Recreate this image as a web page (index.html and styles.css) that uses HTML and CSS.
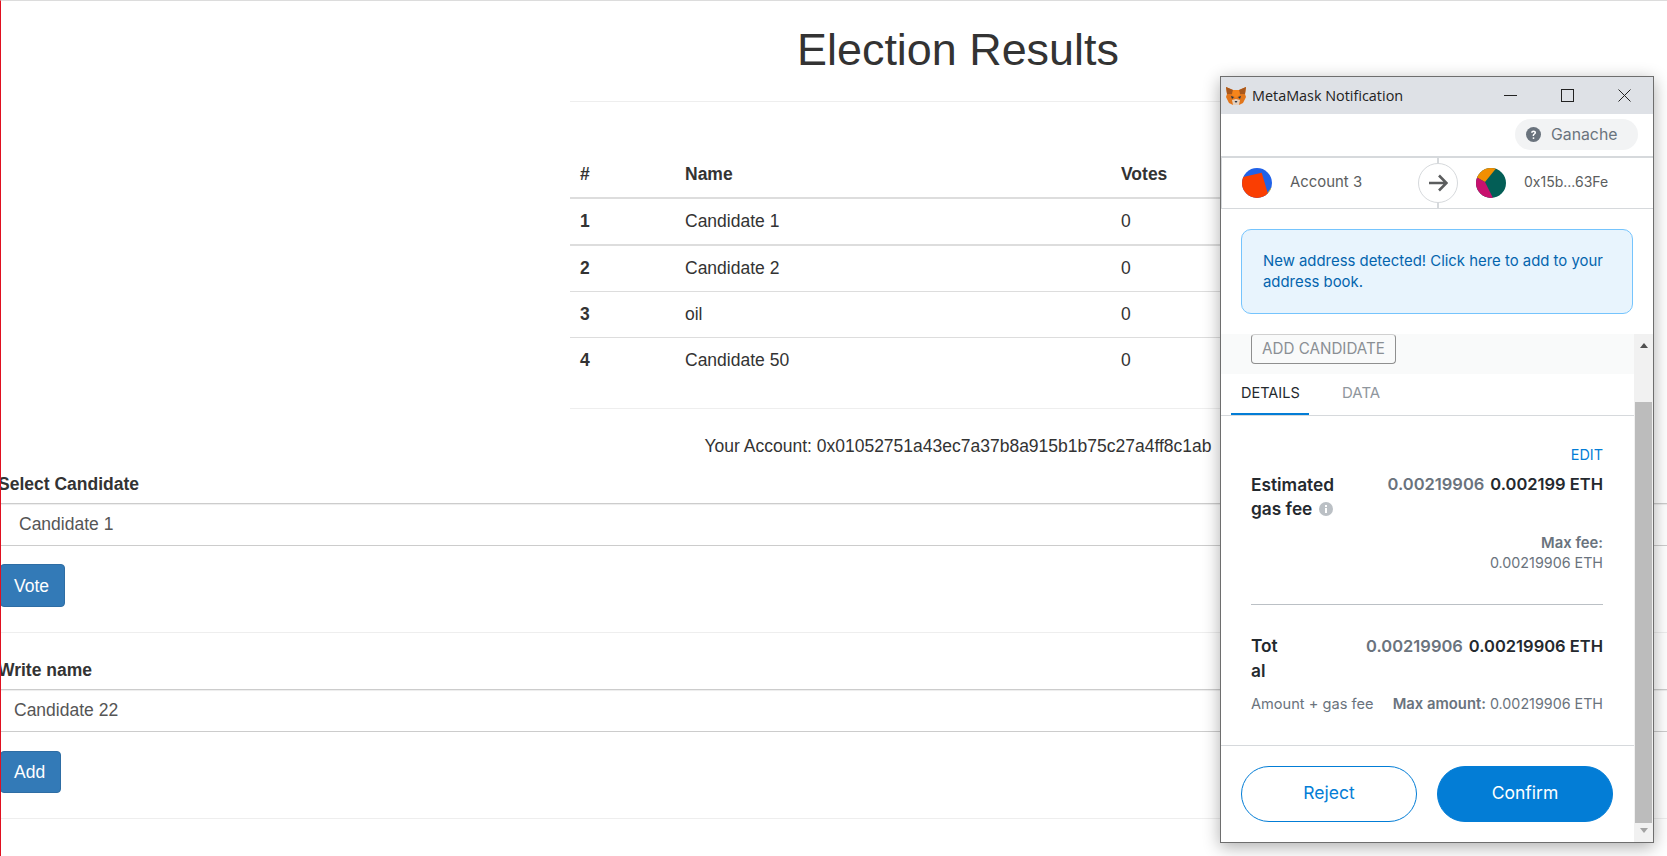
FILE: index.html
```html
<!DOCTYPE html>
<html lang="en">
<head>
<meta charset="utf-8">
<title>Election Results</title>
<link rel="stylesheet" href="styles.css">
</head>
<body>
<div class="page">
  <section class="results">
    <h1 class="title">Election Results</h1>
    <hr class="rule">
    <table class="votes">
      <thead>
        <tr><th class="c-id">#</th><th class="c-name">Name</th><th class="c-votes">Votes</th></tr>
      </thead>
      <tbody>
        <tr class="row-first"><th>1</th><td>Candidate 1</td><td>0</td></tr>
        <tr class="row-second"><th>2</th><td>Candidate 2</td><td>0</td></tr>
        <tr><th>3</th><td>oil</td><td>0</td></tr>
        <tr><th>4</th><td>Candidate 50</td><td>0</td></tr>
      </tbody>
    </table>
    <hr class="rule rule-end">
    <p class="account">Your Account: 0x01052751a43ec7a37b8a915b1b75c27a4ff8c1ab</p>
  </section>

  <form class="vote-form">
    <div class="label">Select Candidate</div>
    <div class="control control-select">Candidate 1</div>
    <div class="btn btn-vote">Vote</div>
    <hr class="rule rule-form">
    <div class="label">Write name</div>
    <div class="control control-input">Candidate 22</div>
    <div class="btn btn-add">Add</div>
    <hr class="rule rule-form">
  </form>

  <div class="popup">
    <header class="titlebar">
      <svg class="fox" viewBox="0 0 20 18" width="20" height="18">
        <polygon points="0,0 7,3 13,3 20,0 19,7 20,10 17,16 13,18 7,18 3,16 0,10 1,7" fill="#e2761b"/>
        <polygon points="0,0 7,3 6,7 1,7" fill="#a9581c"/>
        <polygon points="20,0 13,3 14,7 19,7" fill="#a9581c"/>
        <polygon points="7,3 13,3 14,8 10,11 6,8" fill="#f6851b"/>
        <polygon points="5,9 8,10 6,12" fill="#233447"/>
        <polygon points="15,9 12,10 14,12" fill="#233447"/>
        <polygon points="6,13 10,12 14,13 13,18 7,18" fill="#e4d0bf"/>
        <polygon points="8.5,14 11.5,14 10,16" fill="#233447"/>
      </svg>
      <span class="titlebar-text">MetaMask Notification</span>
      <div class="winctl">
        <span class="winbtn"><svg viewBox="0 0 13 13" width="13" height="13"><path d="M0 6.5H13" stroke="#222" fill="none"/></svg></span>
        <span class="winbtn"><svg viewBox="0 0 13 13" width="13" height="13"><rect x=".5" y=".5" width="12" height="12" stroke="#222" fill="none"/></svg></span>
        <span class="winbtn"><svg viewBox="0 0 13 13" width="13" height="13"><path d="M.5 .5L12.5 12.5M12.5 .5L.5 12.5" stroke="#222" fill="none"/></svg></span>
      </div>
    </header>

    <div class="network-row">
      <div class="network">
        <svg class="network-icon" viewBox="0 0 16 16" width="15" height="15">
          <circle cx="8" cy="8" r="8" fill="#6a737d"/>
          <path d="M5.4 6.2C5.5 4.6 6.6 3.7 8.1 3.7c1.5 0 2.6.9 2.6 2.2 0 1.1-.6 1.6-1.3 2.1-.6.4-.8.7-.8 1.3v.3H7.1v-.5c0-1 .4-1.5 1.1-2 .5-.4.8-.6.8-1.1 0-.5-.4-.8-.9-.8-.6 0-1 .4-1 1Z" fill="#fff"/>
          <circle cx="8" cy="11.8" r="1" fill="#fff"/>
        </svg>
        <span>Ganache</span>
      </div>
    </div>

    <div class="sender-row">
      <div class="party party-from">
        <svg class="identicon" viewBox="0 0 30 30" width="30" height="30">
          <defs><clipPath id="clip-a"><circle cx="15" cy="15" r="15"/></clipPath></defs>
          <g clip-path="url(#clip-a)">
            <rect width="30" height="30" fill="#2162e8"/>
            <polygon points="31,17 31,30 22,30" fill="#f1c40f"/>
            <polygon points="-6,10.5 19.7,4.7 26.3,27 22,34 -4,36" fill="#fa3e02"/>
          </g>
        </svg>
        <span class="party-name party-name-account">Account 3</span>
      </div>
      <div class="arrow-wrap">
        <div class="arrow-circle">
          <svg viewBox="0 0 20 20" width="20" height="20"><path d="M1 10H18M11 2.5L18.5 10L11 17.5" stroke="#5b5d5e" stroke-width="2.6" fill="none"/></svg>
        </div>
      </div>
      <div class="party party-to">
        <svg class="identicon" viewBox="0 0 30 30" width="30" height="30">
          <defs><clipPath id="clip-b"><circle cx="15" cy="15" r="15"/></clipPath></defs>
          <g clip-path="url(#clip-b)">
            <rect width="30" height="30" fill="#035e56"/>
            <polygon points="-2,-2 22,-2 9,14 -2,8" fill="#f18f01"/>
            <polygon points="-2,8 9,14 18,32 -2,32" fill="#c8106e"/>
          </g>
        </svg>
        <span class="party-name">0x15b...63Fe</span>
      </div>
    </div>

    <div class="alert">New address detected! Click here to add to your address book.</div>

    <div class="scroller">
      <div class="scroll-body">
        <div class="method-band"><div class="method-btn">ADD CANDIDATE</div></div>
        <nav class="tabs">
          <span class="tab tab-active">DETAILS</span>
          <span class="tab">DATA</span>
        </nav>
        <div class="details">
          <div class="edit">EDIT</div>
          <div class="fee-row">
            <div class="fee-label fee-label-gas">Estimated gas fee <svg class="info" viewBox="0 0 14 14" width="14" height="14"><circle cx="7" cy="7" r="7" fill="#bbc0c5"/><rect x="6" y="6" width="2" height="5" fill="#fff"/><rect x="6" y="3" width="2" height="2" fill="#fff"/></svg></div>
            <div class="fee-values"><span class="muted-strong">0.00219906</span> <span class="strong">0.002199 ETH</span></div>
          </div>
          <div class="maxfee">
            <div class="maxfee-label">Max fee:</div>
            <div class="maxfee-value">0.00219906 ETH</div>
          </div>
          <hr class="divider">
          <div class="total-row">
            <div class="fee-label fee-label-total">Total</div>
            <div class="fee-values"><span class="muted-strong">0.00219906</span> <span class="strong">0.00219906 ETH</span></div>
          </div>
          <div class="amount-row">
            <span class="amount-text">Amount + gas fee</span>
            <span><b class="maxfee-label">Max amount:</b> 0.00219906 ETH</span>
          </div>
        </div>
        <footer class="actions">
          <div class="action action-reject">Reject</div>
          <div class="action action-confirm">Confirm</div>
        </footer>
      </div>
      <div class="scrollbar">
        <div class="arrow-up"></div>
        <div class="thumb"></div>
        <div class="arrow-down"></div>
      </div>
    </div>
  </div>
</div>
</body>
</html>
```

FILE: styles.css
```css
* { box-sizing: border-box; }
html, body { margin: 0; padding: 0; height: 100%; }
body {
  background: #fff;
  color: #333;
  font-family: "Liberation Sans", Arial, sans-serif;
  font-size: 17.5px;
  overflow: hidden;
}
.page {
  position: relative;
  height: 100%;
  overflow: hidden;
  border-top: 1px solid #dcdcdc;
  border-left: 1px solid #e01020;
}
.rule {
  border: 0;
  border-top: 1px solid #eee;
  margin: 0;
}
.results { width: 776px; margin-left: 569px; }
.title {
  margin: 0;
  height: 100px;
  line-height: 98px;
  font-size: 44.9px;
  font-weight: 400;
  text-align: center;
}
.votes {
  width: 776px;
  margin-top: 50px;
  border-collapse: separate;
  border-spacing: 0;
  table-layout: fixed;
}
.votes th, .votes td {
  padding: 0 10px 2px;
  text-align: left;
  height: 46px;
  line-height: 24px;
}
.votes th { font-weight: 700; }
.votes thead th { height: 47px; border-bottom: 2px solid #ddd; }
.votes tbody tr + tr th, .votes tbody tr + tr td { border-top: 1px solid #ddd; }
.votes .row-first th, .votes .row-first td { height: 45px; }
.votes .row-second th, .votes .row-second td { height: 47px; border-top-width: 2px; }
.c-id { width: 105px; }
.c-name { width: 436px; }
.rule-end { margin-top: 25px; }
.account {
  margin: 25px 0 0;
  line-height: 24px;
  text-align: center;
}
.vote-form { margin: 14px 0 0 -1px; }
.label {
  margin-left: -2px;
  font-weight: 700;
  line-height: 24px;
}
.control {
  margin-top: 7px;
  height: 43px;
  line-height: 41px;
  color: #555;
  border-top: 1px solid #ccc;
  border-bottom: 1px solid #ccc;
  box-shadow: inset 0 1px 1px rgba(0, 0, 0, .075);
}
.control-select { padding-left: 19px; }
.control-input { padding-left: 14px; }
.btn {
  width: max-content;
  color: #fff;
  background: #337ab7;
  border: 1px solid #2e6da4;
  border-radius: 4px;
  line-height: 24px;
}
.btn-vote { margin-top: 18px; padding: 8.5px 15px 8.5px 13px; }
.btn-add { margin-top: 19px; padding: 8px 15px 8px 13px; }
.rule-form { margin-top: 25px; }
.rule-form + .label { margin-top: 25px; }

/* MetaMask window */
.popup {
  position: absolute;
  left: 1219px;
  top: 75px;
  width: 434px;
  height: 767px;
  display: flex;
  flex-direction: column;
  background: #fff;
  border: 1px solid #6e6e6e;
  box-shadow: 0 4px 16px rgba(0, 0, 0, .32);
  font-family: Inter, "Liberation Sans", sans-serif;
  font-size: 14px;
  color: #24292e;
}
.titlebar {
  flex: none;
  height: 37px;
  display: flex;
  align-items: center;
  background: #dee1e6;
  padding-left: 5px;
}
.fox { flex: none; }
.titlebar-text {
  margin-left: 6px;
  font-family: "Open Sans", sans-serif;
  font-size: 14.4px;
  color: #222;
}
.winctl { display: flex; margin-left: auto; }
.winbtn {
  width: 57px;
  height: 37px;
  display: flex;
  align-items: center;
  justify-content: center;
}
.network-row {
  flex: none;
  height: 42px;
  display: flex;
  justify-content: flex-end;
  padding: 5px 15px 0 0;
}
.network {
  width: 123px;
  height: 31px;
  display: flex;
  align-items: center;
  gap: 10px;
  padding-left: 11px;
  border-radius: 16px;
  background: #f2f3f4;
  color: #6a737d;
  font-size: 15.8px;
}
.sender-row {
  flex: none;
  height: 53px;
  display: flex;
  align-items: center;
  border-top: 2px solid #d6d9dc;
  border-bottom: 1px solid #d6d9dc;
  border-left: 1px solid #d6d9dc;
  color: #5b5d5e;
}
.party { display: flex; align-items: center; gap: 18px; padding-bottom: 1px; }
.party-from { width: 196px; padding-left: 20px; }
.party-to { padding-left: 18px; }
.identicon { flex: none; }
.party-name { font-size: 14px; line-height: 18px; padding-bottom: 2px; }
.party-name-account { font-size: 14.9px; }
.arrow-wrap {
  position: relative;
  width: 40px;
  height: 100%;
  display: flex;
  align-items: center;
  justify-content: center;
}
.arrow-wrap::before {
  content: "";
  position: absolute;
  left: 19px;
  top: 0;
  bottom: 0;
  border-left: 2px solid #d6d9dc;
}
.arrow-circle {
  position: relative;
  width: 40px;
  height: 40px;
  margin-bottom: 1px;
  display: flex;
  align-items: center;
  justify-content: center;
  background: #fff;
  border: 1px solid #d6d9dc;
  border-radius: 50%;
}
.alert {
  flex: none;
  height: 85px;
  margin: 20px 20px;
  padding: 21px 21px 0;
  background: #e8f4fd;
  border: 1px solid #75c4fd;
  border-radius: 10px;
  color: #0465ae;
  font-size: 14.9px;
  line-height: 21px;
}
.scroller { flex: 1; min-height: 0; display: flex; }
.scroll-body { flex: 1; min-width: 0; display: flex; flex-direction: column; }
.method-band {
  flex: none;
  height: 40px;
  overflow: hidden;
  padding-left: 30px;
  background: #f9fafa;
}
.method-btn {
  width: 145px;
  height: 30px;
  line-height: 28px;
  text-align: center;
  border: 1px solid #8f8f8f;
  border-top-color: #d0d0d0;
  border-radius: 4px;
  color: #8a8f94;
  font-size: 15.2px;
}
.tabs {
  flex: none;
  height: 42px;
  display: flex;
  padding-left: 10px;
  border-bottom: 1px solid #d6d9dc;
}
.tab {
  padding: 0 10px;
  width: 78px;
  text-align: center;
  height: 41px;
  line-height: 38px;
  color: #9fa6ae;
  font-size: 14.5px;
  white-space: nowrap;
}
.tab + .tab { margin-left: 23px; width: auto; font-size: 15px; color: #8f969d; }
.tab-active { color: #24292e; border-bottom: 2px solid #037dd6; }
.details { flex: 1; padding: 29px 31px 0 30px; }
.edit { text-align: right; color: #037dd6; line-height: 20px; font-size: 14.4px; }
.fee-row, .total-row { display: flex; justify-content: space-between; margin-top: 8px; }
.total-row { margin-top: 29px; line-height: 24.5px; }
.fee-row { line-height: 23.5px; }
.fee-label { font-weight: 600; font-size: 17.3px; color: #24292e; }
.strong { font-weight: 600; font-size: 16.5px; color: #24292e; }
.fee-label-gas { width: 100px; }
.fee-label-total { width: 36px; word-break: break-all; }
.muted-strong { font-weight: 600; font-size: 16.5px; color: #6a737d; margin-right: 2px; }
.fee-values { white-space: nowrap; }
.info { vertical-align: -1px; margin-left: 2px; }
.maxfee { margin-top: 13px; text-align: right; color: #6a737d; line-height: 20px; font-size: 14.3px; }
.maxfee-label { font-weight: 600; color: #6a737d; font-size: 14.8px; }
.divider { margin: 31px 0 0; border: 0; border-top: 1px solid #bbc0c5; }
.amount-row {
  display: flex;
  justify-content: space-between;
  margin-top: 11px;
  color: #6a737d;
  line-height: 20px;
  font-size: 14.3px;
  white-space: nowrap;
}
.amount-text { font-size: 14.6px; }
.actions {
  flex: none;
  display: flex;
  gap: 20px;
  padding: 20px;
  border-top: 1px solid #d6d9dc;
}
.action {
  width: 176px;
  height: 56px;
  line-height: 52px;
  text-align: center;
  border: 1px solid #037dd6;
  border-radius: 28px;
  font-size: 17.5px;
  color: #037dd6;
}
.action-confirm { background: #037dd6; color: #fff; }
.scrollbar {
  flex: none;
  width: 19px;
  display: flex;
  flex-direction: column;
  align-items: center;
  background: #f1f1f1;
  padding: 9px 1px;
}
.thumb { flex: 1; width: 17px; margin: 54px 0 5px; background: #bcbcbc; }
.arrow-up {
  flex: none;
  border: 4px solid transparent;
  border-top: 0;
  border-bottom: 5px solid #505050;
}
.arrow-down {
  flex: none;
  border: 4px solid transparent;
  border-bottom: 0;
  border-top: 5px solid #a3a3a3;
}
```
